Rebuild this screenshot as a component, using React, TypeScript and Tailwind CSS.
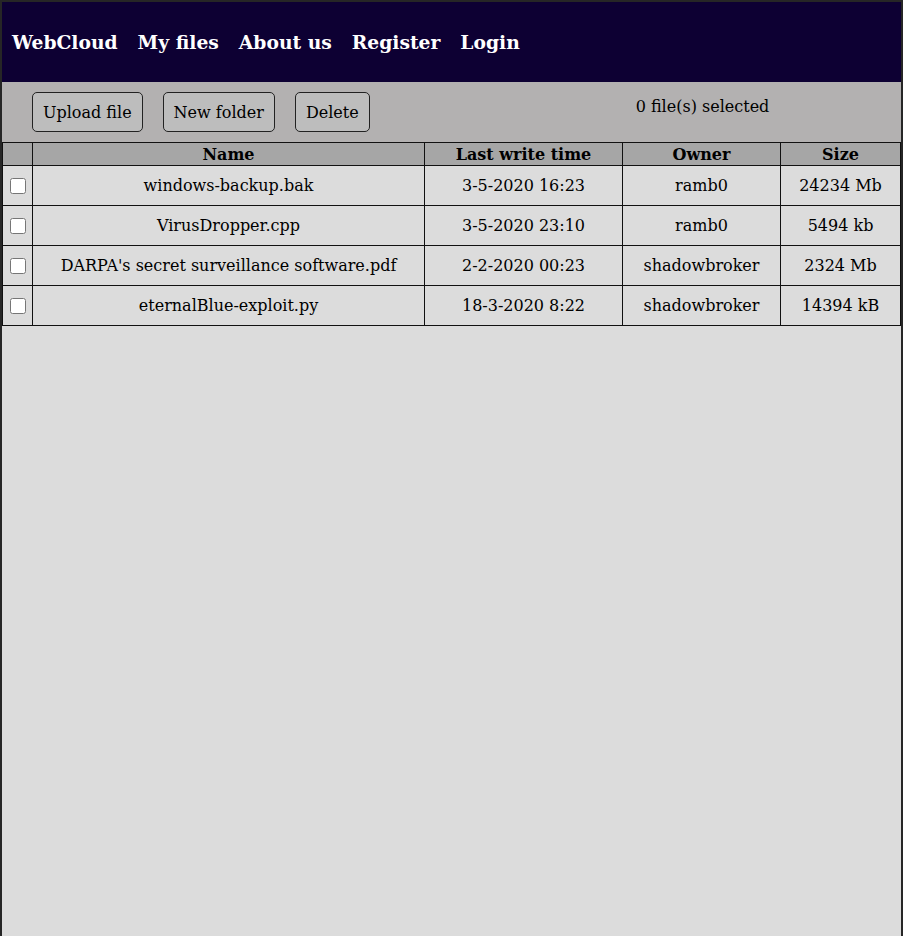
import React from 'react';

interface FileRow {
  name: string;
  time: string;
  owner: string;
  size: string;
}

const files: FileRow[] = [
  { name: 'windows-backup.bak', time: '3-5-2020 16:23', owner: 'ramb0', size: '24234 Mb' },
  { name: 'VirusDropper.cpp', time: '3-5-2020 23:10', owner: 'ramb0', size: '5494 kb' },
  { name: "DARPA's secret surveillance software.pdf", time: '2-2-2020 00:23', owner: 'shadowbroker', size: '2324 Mb' },
  { name: 'eternalBlue-exploit.py', time: '18-3-2020 8:22', owner: 'shadowbroker', size: '14394 kB' },
];

const navItems = ['WebCloud', 'My files', 'About us', 'Register', 'Login'];

export default function App() {
  return (
    <div className="min-h-[936px] border-x-2 border-t-2 border-[#262626] bg-[#dcdcdc] text-black font-['DejaVu_Serif',serif] text-[16px]">
      {/* Nav */}
      <nav className="h-20 bg-[#0d0033] flex items-center gap-5 pl-[10px]">
        {navItems.map(item => (
          <a key={item} className="text-white font-bold text-[18.72px] cursor-pointer">
            {item}
          </a>
        ))}
      </nav>

      {/* Toolbar */}
      <div className="h-[60px] bg-[#b3b1b1] flex items-center pl-[30px]">
        <div className="flex gap-5">
          <button className="h-10 px-[10px] pt-px bg-[#bdbdbd] border border-[#222] rounded-[5px]">Upload file</button>
          <button className="h-10 px-[10px] pt-px bg-[#bdbdbd] border border-[#222] rounded-[5px]">New folder</button>
          <button className="h-10 px-[10px] pt-px bg-[#bdbdbd] border border-[#222] rounded-[5px]">Delete</button>
        </div>
        <span className="self-start mt-[13px] ml-[266px] leading-6">0 file(s) selected</span>
      </div>

      {/* Files table */}
      <table className="w-full border-collapse table-fixed">
        <colgroup>
          <col className="w-[30px]" />
          <col className="w-[392px]" />
          <col className="w-[198px]" />
          <col className="w-[158px]" />
          <col />
        </colgroup>
        <thead>
          <tr className="bg-[#a6a6a6] h-[23px]">
            <th className="border border-[#111] p-0"></th>
            <th className="border border-[#111] p-0 pt-px leading-5">Name</th>
            <th className="border border-[#111] p-0 pt-px leading-5">Last write time</th>
            <th className="border border-[#111] p-0 pt-px leading-5">Owner</th>
            <th className="border border-[#111] p-0 pt-px leading-5">Size</th>
          </tr>
        </thead>
        <tbody>
          {files.map(f => (
            <tr key={f.name} className="h-10">
              <td className="border border-[#111] p-0 text-center">
                <input type="checkbox" className="w-4 h-4 align-middle" />
              </td>
              <td className="border border-[#111] p-0 text-center">{f.name}</td>
              <td className="border border-[#111] p-0 text-center">{f.time}</td>
              <td className="border border-[#111] p-0 text-center">{f.owner}</td>
              <td className="border border-[#111] p-0 text-center">{f.size}</td>
            </tr>
          ))}
        </tbody>
      </table>
    </div>
  );
}
